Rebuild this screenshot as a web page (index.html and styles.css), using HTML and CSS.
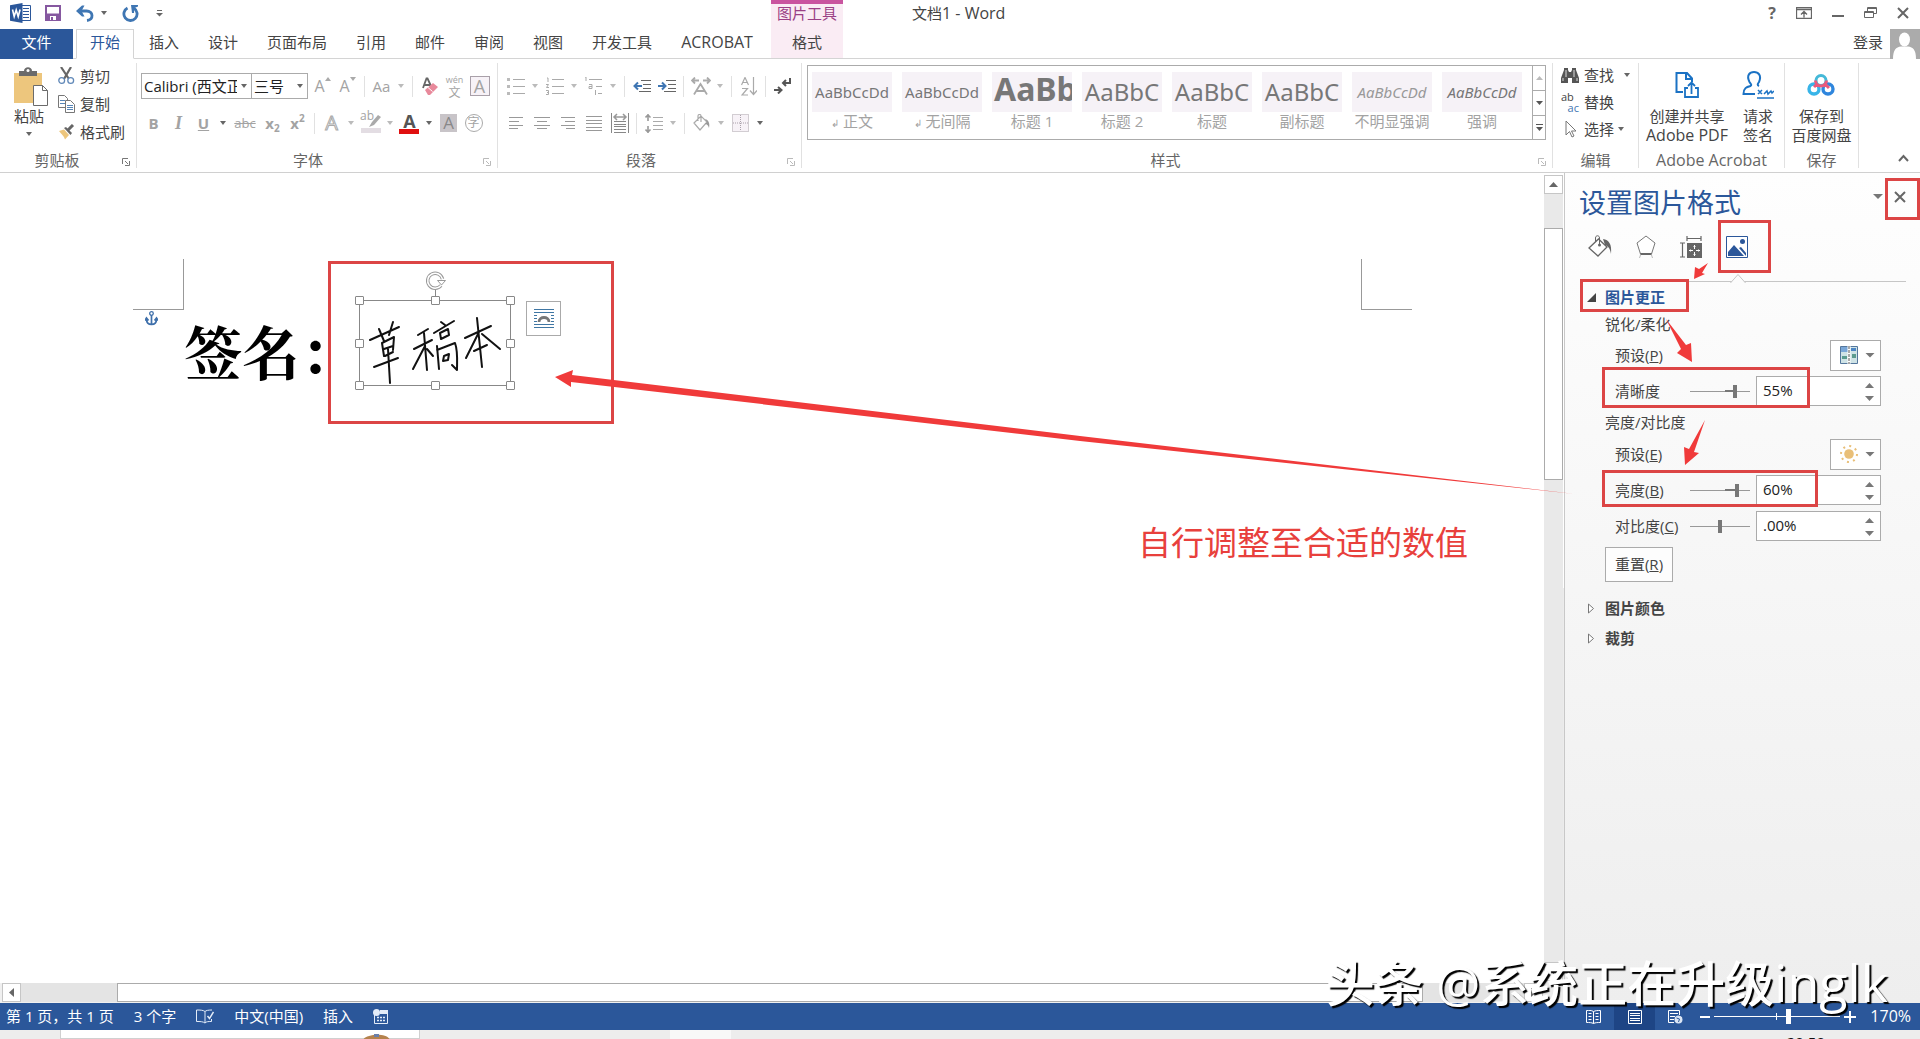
FILE: index.html
```html
<!DOCTYPE html>
<html lang="zh-CN">
<head>
<meta charset="utf-8">
<title>文档1 - Word</title>
<link rel="stylesheet" href="styles.css">
</head>
<body>
<header>
  <div class="titlebar">
    <div class="quick">
      <svg class="word-logo" width="21" height="20" viewBox="0 0 21 20"><path d="M12 2.500h8.500v15H12" fill="#fff" stroke="#2b579a"/><path d="M13 5.500h6M13 8.500h6M13 11.500h6M13 14.500h6" stroke="#2b579a"/><path d="M0 2.200L12.500 0v20L0 17.800z" fill="#2b579a"/><path d="M2.500 6.500l1.700 7 2-6.500 2 6.500 1.900-7" fill="none" stroke="#fff" stroke-width="1.600"/></svg>
      <button aria-label="保存"><svg width="16" height="16" viewBox="0 0 16 16"><path d="M1 1h14v14H1z" fill="#fff" stroke="#8658a0" stroke-width="2"/><path d="M2 8.500h12V15H2z" fill="#8658a0"/><path d="M5 11h6v4H5z" fill="#fff"/><path d="M6 12h2v3H6z" fill="#8658a0"/></svg></button>
      <button aria-label="撤消"><svg width="18" height="17" viewBox="0 0 18 17"><path d="M2 6h8.500c7 0 7.500 8.500.5 9.500" fill="none" stroke="#3f76b3" stroke-width="2.800"/><path d="M0 6l6-5.500h2.500L5.500 6l3 5.500H6z" fill="#3f76b3"/></svg></button>
      <i class="caret dark"></i>
      <button aria-label="恢复" class="redo"><svg width="17" height="17" viewBox="0 0 17 17"><path d="M5.500 3A6.600 6.600 0 1 0 12 3.300" fill="none" stroke="#3f76b3" stroke-width="2.800"/><path d="M9 0h7v1.500L12.500 3l-.5 5H10z" fill="#3f76b3"/></svg></button>
      <svg class="custom" width="7" height="7" viewBox="0 0 7 7"><path d="M1 .5h5" stroke="#666"/><path d="M0 3h7L3.500 6.500z" fill="#666"/></svg>
    </div>
    <div class="context-title">图片工具</div>
    <div class="doc-title">文档<span class="latin">1 - Word</span></div>
    <div class="window-controls">
      <button aria-label="帮助" class="help">?</button>
      <button aria-label="功能区显示选项"><svg width="16" height="12" viewBox="0 0 16 12"><path d="M.5.500h15v11H.5zM.5 2.500h15M8 10.500V5M5 7.500l3-3 3 3" fill="none" stroke="#666" stroke-width="1.300"/></svg></button>
      <button aria-label="最小化"><svg width="12" height="12" viewBox="0 0 12 12"><path d="M0 9h12" stroke="#666" stroke-width="2"/></svg></button>
      <button aria-label="还原"><svg width="13" height="12" viewBox="0 0 13 12"><path d="M.5 4.500h9v6h-9zM3.500 4V.5h9v6H10M.5 5.500h9M3.500 1.500h9" fill="none" stroke="#666"/></svg></button>
      <button aria-label="关闭"><svg width="12" height="12" viewBox="0 0 12 12"><path d="M1 1l10 10M11 1L1 11" stroke="#666" stroke-width="2"/></svg></button>
    </div>
  </div>
  <nav class="tabs">
    <div class="tabs-main">
      <button class="file">文件</button>
      <button class="active">开始</button>
      <button>插入</button>
      <button>设计</button>
      <button>页面布局</button>
      <button>引用</button>
      <button>邮件</button>
      <button>审阅</button>
      <button>视图</button>
      <button>开发工具</button>
      <button class="latin">ACROBAT</button>
    </div>
    <button class="context-tab">格式</button>
    <a class="login" href="#">登录</a>
    <svg class="avatar" width="30" height="30" viewBox="0 0 30 30"><path d="M0 0h30v30H0z" fill="#ababab"/><ellipse cx="14.500" cy="10.500" rx="5.500" ry="7" fill="#fff"/><path d="M3 30c0-9 3-12 8-12.500h7c5 .5 8 3.500 8 12.500z" fill="#fff"/></svg>
  </nav>
  <div class="ribbon">
    <section class="group clipboard">
      <div class="group-body">
        <button class="big paste"><svg width="36" height="39" viewBox="0 0 36 39"><path d="M1 6h28v30H1z" fill="#edc67d"/><path d="M6 4h5c0-5 8-5 8 0h5v5H6z" fill="#6b6b6b"/><circle cx="15" cy="3.500" r="1.500" fill="#fff"/><path d="M20.500 18.500h9l5 5V38.500h-14z" fill="#fff" stroke="#6b6b6b"/><path d="M29.500 18.500v5h5" fill="none" stroke="#6b6b6b"/></svg><span>粘贴</span><i class="caret dark"></i></button>
        <div class="stack">
          <button><svg width="17" height="18" viewBox="0 0 17 18"><path d="M3 0l8 12M13 0L6 12" stroke="#666" stroke-width="2.200"/><circle cx="3.700" cy="13.500" r="2.900" fill="#fff" stroke="#6088b8" stroke-width="1.300"/><circle cx="12.700" cy="13.500" r="2.900" fill="#fff" stroke="#6088b8" stroke-width="1.300"/></svg>剪切</button>
          <button><svg width="17" height="18" viewBox="0 0 17 18"><path d="M.5.500h6l3 3v9h-9z" fill="#fff" stroke="#777"/><path d="M2 5.500h5M2 8.500h5" stroke="#5585b8"/><path d="M7.500 5.500h5l4 4v8h-9z" fill="#fff" stroke="#777"/><path d="M9 10.500h6M9 12.500h6M9 14.500h6" stroke="#5585b8"/></svg>复制</button>
          <button><svg width="17" height="16" viewBox="0 0 17 16"><path d="M1 7l5-1.500L11 11l-4 4.500C6 12 3 10 1 7z" fill="#edc67d"/><path d="M6 4l2-1 6 6-1.500 2z" fill="#666"/><path d="M10 6l5-5" stroke="#666" stroke-width="3"/></svg>格式刷</button>
        </div>
      </div>
      <footer class="has-launch">剪贴板<svg class="launch" width="8" height="8" viewBox="0 0 8 8"><path d="M.5 6V.500H6M3 3l3 3M7.500 3v4.500H3" fill="none" stroke="#777"/></svg></footer>
    </section>

    <section class="group font">
      <div class="rows">
        <div class="tools">
          <button class="combo name" aria-label="字体"><span>Calibri (西文正文)</span><i class="caret dark"></i></button>
          <button class="combo size" aria-label="字号"><span>三号</span><i class="caret dark"></i></button>
          <button class="t grow" aria-label="增大字号">A<svg width="6" height="4"><path d="M0 4h6L3 0z" fill="#aaa"/></svg></button>
          <button class="t grow" aria-label="减小字号">A<svg width="6" height="4"><path d="M0 0h6L3 4z" fill="#aaa"/></svg></button>
          <i class="sep"></i>
          <button class="t aa">Aa</button><i class="caret"></i>
          <i class="sep"></i>
          <button class="t" aria-label="清除格式"><svg width="16" height="18" viewBox="0 0 16 18"><path d="M1 11L4.500 1.500h1L9 9M2 8h6" fill="none" stroke="#666" stroke-width="1.800"/><path d="M3 13l8-7 5 4-8 8H6z" fill="#e8899b"/><path d="M6 10.500l4.500 4" stroke="#fff"/></svg></button>
          <button class="t pinyin"><small>wén</small><span>文</span></button>
          <button class="t"><span class="boxed">A</span></button>
        </div>
        <div class="tools">
          <button class="t bold">B</button>
          <button class="t italic">I</button>
          <button class="t under">U</button><i class="caret dark"></i>
          <button class="t strike">abc</button>
          <button class="t script">x<sub>2</sub></button>
          <button class="t script">x<sup>2</sup></button>
          <i class="sep"></i>
          <button class="t outline">A</button><i class="caret"></i>
          <button class="t mark"><span>ab</span><svg width="20" height="19" viewBox="0 0 20 19"><path d="M0 14h20v5H0z" fill="#e3dde3"/><path d="M8 13l3-5 6-7 3 2-7 8z" fill="#aaa"/></svg></button><i class="caret"></i>
          <button class="t color">A</button><i class="caret dark"></i>
          <button class="t"><span class="shaded">A</span></button>
          <button class="t"><span class="circled">字</span></button>
        </div>
      </div>
      <footer class="has-launch">字体<svg class="launch dim" width="8" height="8" viewBox="0 0 8 8"><path d="M.5 6V.500H6M3 3l3 3M7.500 3v4.500H3" fill="none" stroke="#777"/></svg></footer>
    </section>

    <section class="group para">
      <div class="rows">
        <div class="tools">
          <button class="t" aria-label="项目符号"><svg width="18" height="18" viewBox="0 0 18 18"><path d="M6 2.500h12M6 9.500h12M6 16.500h12" stroke="#aaa"/><path d="M0 1h3v3H0zM0 8h3v3H0zM0 15h3v3H0z" fill="#bbb"/></svg></button><i class="caret"></i>
          <button class="t num" aria-label="编号"><svg width="18" height="18" viewBox="0 0 18 18"><path d="M6 2.500h12M6 9.500h12M6 16.500h12" stroke="#aaa"/><path d="M1 1h1v4M0 7.500h2.500L.5 10.500h2.500M0 13.500h2.500v4H0M1 15.500h1.500" fill="none" stroke="#aaa"/></svg></button><i class="caret"></i>
          <button class="t" aria-label="多级列表"><svg width="20" height="18" viewBox="0 0 20 18"><path d="M5 2.500h13M12 9.500h6M14 16.500h4M1 0h1v4M5 7.500h3v4H5v-2h3M11.500 13v5" fill="none" stroke="#aaa"/></svg></button><i class="caret"></i>
          <i class="sep"></i>
          <button class="t" aria-label="减少缩进量"><svg width="18" height="12" viewBox="0 0 18 12"><path d="M8 .5h10M10 4.500h8M10 8.500h8M6 11.500h12" stroke="#666"/><path d="M2 6h7M5 2.500L1.500 6 5 9.500" fill="none" stroke="#3f76b3" stroke-width="2"/></svg></button>
          <button class="t" aria-label="增加缩进量"><svg width="18" height="12" viewBox="0 0 18 12"><path d="M8 .5h10M10 4.500h8M10 8.500h8M6 11.500h12" stroke="#666"/><path d="M0 6h7M4 2.500L7.500 6 4 9.500" fill="none" stroke="#3f76b3" stroke-width="2"/></svg></button>
          <i class="sep"></i>
          <button class="t" aria-label="中文版式"><svg width="20" height="18" viewBox="0 0 20 18"><path d="M3 17.500L9.500 7 16 17.500M6 14h7M1 3.500h7M4 .5l-3 3 3 3M12 3.500h7M16 .5l3 3-3 3" fill="none" stroke="#aaa" stroke-width="1.800"/></svg></button><i class="caret"></i>
          <i class="sep"></i>
          <button class="t" aria-label="排序"><svg width="16" height="19" viewBox="0 0 16 19"><path d="M.5 8L4 .5 7.500 8M2 5.500h4M1 11.500h5.500L1 18h6M12.500 0v17M9 13.500l3.500 4 3.500-4" fill="none" stroke="#aaa" stroke-width="1.200"/></svg></button>
          <i class="sep"></i>
          <button class="t" aria-label="显示编辑标记"><svg width="17" height="16" viewBox="0 0 17 16"><path d="M16 0v5h-6M12 2L9 5l3 3M0 12h6M4 9l3.500 3L4 15.500" fill="none" stroke="#555" stroke-width="2"/></svg></button>
        </div>
        <div class="tools">
          <div class="aligns">
            <button class="t" aria-label="左对齐"><svg width="16" height="12" viewBox="0 0 16 12"><path d="M1 .5h14M1 4.500h10M1 8.500h14M1 11.500h9" stroke="#999"/></svg></button>
            <button class="t" aria-label="居中"><svg width="16" height="12" viewBox="0 0 16 12"><path d="M0 .5h16M3 4.500h10M0 8.500h16M3 11.500h10" stroke="#999"/></svg></button>
            <button class="t" aria-label="右对齐"><svg width="16" height="12" viewBox="0 0 16 12"><path d="M1 .5h14M5 4.500h10M1 8.500h14M6 11.500h9" stroke="#999"/></svg></button>
            <button class="t" aria-label="两端对齐"><svg width="16" height="15" viewBox="0 0 16 15"><path d="M0 .5h16M0 4.500h16M0 7.500h16M0 11.500h16M0 14.500h16" stroke="#999"/></svg></button>
            <button class="t" aria-label="分散对齐"><svg width="18" height="20" viewBox="0 0 18 20"><path d="M.5 0v20M17.500 0v20M3 8.500h12M3 11.500h12M3 13.500h12M3 16.500h12M3 19.500h12" stroke="#888"/><path d="M3 4h12M6 1L3 4l3 3M12 1l3 3-3 3" fill="none" stroke="#999" stroke-width="1.500"/></svg></button>
          </div>
          <i class="sep"></i>
          <button class="t" aria-label="行距"><svg width="18" height="19" viewBox="0 0 18 19"><path d="M8 3.500h10M8 7.500h10M8 11.500h10M8 15.500h10" stroke="#aaa"/><path d="M3 0v7M3 12v7M.5 3.500L3 1l2.500 2.500M.5 15.500L3 18l2.500-2.500" fill="none" stroke="#999" stroke-width="1.600"/></svg></button><i class="caret"></i>
          <i class="sep"></i>
          <button class="t" aria-label="底纹"><svg width="17" height="18" viewBox="0 0 17 18"><path d="M1 9l7-7 6 6-7 8zM5 7V2c0-2 3-2 3 0v6" fill="none" stroke="#aaa" stroke-width="1.200"/><path d="M12 5c4 1 5 5 4 9-1-3-2-4-4-4l2-2z" fill="#999"/></svg></button><i class="caret"></i>
          <button class="t" aria-label="边框"><svg width="17" height="18" viewBox="0 0 17 18"><path d="M.5.500h16v17H.5z" fill="#f7f2f7" stroke="#a9a0a9" stroke-dasharray="1 1"/><path d="M8.500 1v16M1 9h15" stroke="#a9a0a9" stroke-dasharray="1 1"/></svg></button><i class="caret dark"></i>
        </div>
      </div>
      <footer class="has-launch">段落<svg class="launch dim" width="8" height="8" viewBox="0 0 8 8"><path d="M.5 6V.500H6M3 3l3 3M7.500 3v4.500H3" fill="none" stroke="#777"/></svg></footer>
    </section>

    <section class="group styles">
      <div class="gallery">
        <button><span class="sample">AaBbCcDd</span><span><small>↲</small> 正文</span></button>
        <button><span class="sample">AaBbCcDd</span><span><small>↲</small> 无间隔</span></button>
        <button><span class="sample h1">AaBb</span><span>标题 1</span></button>
        <button><span class="sample h2">AaBbC</span><span>标题 2</span></button>
        <button><span class="sample h2">AaBbC</span><span>标题</span></button>
        <button><span class="sample h2">AaBbC</span><span>副标题</span></button>
        <button><span class="sample em soft">AaBbCcDd</span><span>不明显强调</span></button>
        <button><span class="sample em">AaBbCcDd</span><span>强调</span></button>
        <div class="gallery-nav">
          <button aria-label="上一行"><svg width="7" height="4"><path d="M0 4h7L3.500 0z" fill="#bbb"/></svg></button>
          <button aria-label="下一行"><svg width="7" height="4"><path d="M0 0h7L3.500 4z" fill="#555"/></svg></button>
          <button aria-label="其他"><svg width="7" height="7"><path d="M0 0h7v1H0zM0 3h7L3.500 7z" fill="#555"/></svg></button>
        </div>
      </div>
      <footer class="has-launch">样式<svg class="launch dim" width="8" height="8" viewBox="0 0 8 8"><path d="M.5 6V.500H6M3 3l3 3M7.500 3v4.500H3" fill="none" stroke="#777"/></svg></footer>
    </section>

    <section class="group edit">
      <div class="stack">
        <button><svg width="18" height="16" viewBox="0 0 18 16"><path d="M0 16v-5L3 3V1h4v2l1 2h2l1-2V1h4v2l3 8v5h-7v-5H7v5z" fill="#555"/><path d="M2 14v-3M16 14v-3M5 3v7M13 3v7" stroke="#ddd"/></svg>查找<i class="caret dark far"></i></button>
        <button><span class="swap" aria-hidden="true"><b>ab</b><em>ac</em></span>替换</button>
        <button><svg width="18" height="18" viewBox="0 0 18 18"><path d="M5 1v14l3.500-3.500L11 17l2-1-2.500-5H15z" fill="#fff" stroke="#777"/></svg>选择<i class="caret dark"></i></button>
      </div>
      <footer>编辑</footer>
    </section>

    <section class="group acrobat">
      <div class="group-body">
        <button class="big"><svg width="26" height="28" viewBox="0 0 26 28"><path d="M9 21H2.500V2H13l5 5.500V11M12 2v6h6" fill="none" stroke="#1b72c4" stroke-width="2"/><path d="M14 17h-3v9h13v-9h-3M17.500 23V12M14 15l3.500-3.500L21 15" fill="none" stroke="#1b72c4" stroke-width="1.800"/></svg><span>创建并共享<br><span class="latin">Adobe PDF</span></span></button>
        <button class="big"><svg width="32" height="28" viewBox="0 0 32 28"><path d="M13 23H1.500c0-6 3-7 7-8 1.500-1 .5-2-1-4C4 4 8 1 12 1s8 3 5 10c-1.500 2-2 3 0 4" fill="none" stroke="#1b72c4" stroke-width="2"/><path d="M15 27h17M16 19l4 4m0-4l-4 4M22 23l3-3 1 3 3-3 1 2 2-2" fill="none" stroke="#1b72c4" stroke-width="1.500"/></svg><span>请求<br>签名</span></button>
      </div>
      <footer class="latin">Adobe Acrobat</footer>
    </section>

    <section class="group save">
      <div class="group-body">
        <button class="big"><svg width="28" height="28" viewBox="0 0 28 28"><circle cx="14" cy="9.500" r="5" fill="none" stroke="#45b9d8" stroke-width="3"/><circle cx="7" cy="18" r="5" fill="none" stroke="#38b4e8" stroke-width="3.400"/><circle cx="21" cy="18" r="5" fill="none" stroke="#2f86dd" stroke-width="3.400"/><path d="M8.500 9.500a5.500 5.500 0 0 0 11 0M10 13l-3 3M18 13l4 4" fill="none" stroke="#e95a7d" stroke-width="3"/></svg><span>保存到<br>百度网盘</span></button>
      </div>
      <footer>保存</footer>
    </section>
    <button class="collapse" aria-label="折叠功能区"><svg width="11" height="8" viewBox="0 0 11 8"><path d="M1 7l4.500-5L10 7" fill="none" stroke="#666" stroke-width="2"/></svg></button>
  </div>
</header>

<main>
  <div class="document">
    <article class="page">
      <div class="margins"><span class="corner left"></span><span class="corner right"></span></div>
      <svg class="anchor" width="13" height="15" viewBox="0 0 13 15"><circle cx="6.500" cy="2.500" r="1.800" fill="none" stroke="#3f70ab" stroke-width="1.300"/><path d="M6.500 4v9.500M1.500 8c0 3.500 2 5.500 5 5.500s5-2 5-5.500M0 9.500L1.500 7 3.500 9.500M9.500 9.500L11.500 7 13 9.500" fill="none" stroke="#3f70ab" stroke-width="1.700"/></svg>
      <div class="line">
        <h1>签名：</h1>
        <div class="picture">
          <svg width="152" height="87" viewBox="0 0 152 87" role="img" aria-label="草稿本"><g fill="none" stroke="#111" stroke-width="2" stroke-linecap="round" stroke-linejoin="round"><path d="M10 39L39 26M19 28l5 12M33 21l-4 13M22 42l2 13M22 42l12-6-1 13M24 48l9-3M25 55l8-4M14 66l24-9M28 48l2 34"/><path d="M58 34l10-6M54 48l18-9M64 32l3 37M65 45L53 68M67 48l6 7M81 21l4 3M74 32l20-12M80 32l8-4 1 6-8 4zM77 45l2 23M77 49l18-7c3 8 2 18 2 27l-5-5M84 55l5-2-1 6-5 1z"/><path d="M105 37l26-12M117 17l5 49M119 31L106 57M122 33l18 15M114 50l13-6"/></g></svg>
          <i class="stem"></i>
          <svg class="rotate" width="20" height="19" viewBox="0 0 20 19"><path d="M15 14.500A7.500 7.500 0 1 1 16.500 8" fill="none" stroke="#999" stroke-width="3.500"/><path d="M15 14.500A7.500 7.500 0 1 1 16.500 8" fill="none" stroke="#fff" stroke-width="1.500"/><path d="M11.500 9.500h8l-4 4.500z" fill="#fff" stroke="#999"/></svg>
          <i class="h nw"></i><i class="h n"></i><i class="h ne"></i><i class="h w"></i><i class="h e"></i><i class="h sw"></i><i class="h s"></i><i class="h se"></i>
        </div>
        <button class="layout-options" aria-label="布局选项"><svg width="20" height="20" viewBox="0 0 20 20"><path d="M0 .5h20M0 3.500h20M0 15.500h20M0 18.500h20M0 6.500h3M0 9.500h3M0 12.500h3M17 6.500h3M17 9.500h3M17 12.500h3" stroke="#3f76a3"/><path d="M5 13c0-6 10-6 10 0" fill="none" stroke="#777" stroke-width="2.800"/></svg></button>
      </div>
    </article>
    <div class="hscroll">
      <button aria-label="向左"><svg width="5" height="9"><path d="M5 0v9L0 4.500z" fill="#666"/></svg></button>
      <i class="lead"></i><i class="thumb"></i><i class="rest"></i>
      <button aria-label="向右"><svg width="5" height="9"><path d="M0 0v9l5-4.500z" fill="#666"/></svg></button>
    </div>
  </div>
  <div class="vscroll">
    <button aria-label="向上"><svg width="9" height="5"><path d="M0 5h9L4.500 0z" fill="#666"/></svg></button>
    <i class="lead"></i><i class="thumb"></i><i class="rest"></i>
    <button aria-label="向下"><svg width="9" height="5"><path d="M0 0h9L4.500 5z" fill="#666"/></svg></button>
  </div>
  <aside class="pane">
    <div class="pane-head"><h2>设置图片格式</h2><i class="caret wide"></i><button aria-label="关闭窗格"><svg width="12" height="12" viewBox="0 0 12 12"><path d="M1 1l10 10M11 1L1 11" stroke="#666" stroke-width="2"/></svg></button></div>
    <div class="pane-tabs">
      <button aria-label="填充与线条"><svg width="24" height="23" viewBox="0 0 24 23"><path d="M1 13L10.500 4 19 12l-9 9z" fill="#fff" stroke="#666" stroke-width="1.300"/><path d="M7.500 7V3c0-3 4-3 4 0v7" fill="none" stroke="#666"/><circle cx="11.500" cy="10" r="1.500" fill="#666"/><path d="M15 4c6 1 9 5 8 15-1-6-3-8-6-9z" fill="#666"/></svg></button>
      <button aria-label="效果"><svg width="20" height="23" viewBox="0 0 20 23"><path d="M10 1l9 7-3.500 11h-11L1 8z" fill="#fff" stroke="#777"/><path d="M4.500 19h11" stroke="#666" stroke-width="2"/><path d="M4.500 20l-1 3M15.500 20l1 3" stroke="#bbb"/></svg></button>
      <button aria-label="布局属性"><svg width="22" height="22" viewBox="0 0 22 22"><path d="M7 2.500h14M7 0v5M21 0v5M2.500 7v14M0 7h5M0 21h5" stroke="#666" stroke-width="1.200"/><path d="M7 7h15v15H7z" fill="#666"/><path d="M14.500 9v4M14.500 16v4M9 14.500h4M16 14.500h4M13.500 10.500l1-1 1 1M13.500 18.500l1 1 1-1M10.500 13.500l-1 1 1 1M18.500 13.500l1 1-1 1" fill="none" stroke="#fff"/></svg></button>
      <button aria-label="图片"><svg width="22" height="22" viewBox="0 0 22 22"><path d="M.5.500h21v21H.5z" fill="#fff" stroke="#2b579a"/><circle cx="16.500" cy="5.500" r="2.500" fill="#2b579a"/><path d="M2 20v-4l6-7 10 11zM13 12l2-1 5 6v3z" fill="#2b579a"/></svg></button>
    </div>
    <svg class="notch" width="16" height="9" viewBox="0 0 16 9"><path d="M0 9.500L8 .5l8 9z" fill="#fcfcfc" stroke="#c6c6c6"/></svg>
    <div class="pane-body">
      <button class="section open"><svg width="9" height="9"><path d="M9 0v9H0z" fill="#444"/></svg>图片更正</button>
      <h3>锐化/柔化</h3>
      <div class="row"><label for="p1">预设(<u>P</u>)</label><button id="p1" class="preset"><svg width="18" height="18" viewBox="0 0 18 18"><path d="M.5.500h17v17H.5z" fill="#cfe3e6" stroke="#55779c"/><path d="M1 1h7v5H1z" fill="#7aa7d8"/><path d="M2 10h5v3H2zM12 8h4v4h-4z" fill="#5b9b8f"/><path d="M11 2h5v3h-5z" fill="#4d86c4"/><path d="M9 0v18" stroke="#fff" stroke-width="3"/><path d="M9 0v18" stroke="#555" stroke-dasharray="3 1"/></svg><i class="caret wide"></i></button></div>
      <div class="row"><label for="r1">清晰度</label><input id="r1" class="up" type="range" min="-100" max="100" value="55"><span class="spin"><input type="text" value="55%" aria-label="清晰度数值"><span class="arrows"><i></i><i></i></span></span></div>
      <h3>亮度/对比度</h3>
      <div class="row"><label for="p2">预设(<u>E</u>)</label><button id="p2" class="preset"><svg width="18" height="18" viewBox="0 0 18 18"><circle cx="9" cy="9" r="4.800" fill="#e9bf78"/><circle cx="9" cy="9" r="8" fill="none" stroke="#e9bf78" stroke-width="2" stroke-dasharray="2 4.280"/></svg><i class="caret wide"></i></button></div>
      <div class="row"><label for="r2">亮度(<u>B</u>)</label><input id="r2" class="up" type="range" min="-100" max="100" value="60"><span class="spin"><input type="text" value="60%" aria-label="亮度数值"><span class="arrows"><i></i><i></i></span></span></div>
      <div class="row"><label for="r3">对比度(<u>C</u>)</label><input id="r3" type="range" min="-100" max="100" value="0"><span class="spin"><input type="text" value=".00%" aria-label="对比度数值"><span class="arrows"><i></i><i></i></span></span></div>
      <button class="reset">重置(<u>R</u>)</button>
      <button class="section"><svg width="9" height="11" viewBox="0 0 9 11"><path d="M1.500 1v9L6.500 5.500z" fill="#fff" stroke="#777"/></svg>图片颜色</button>
      <button class="section"><svg width="9" height="11" viewBox="0 0 9 11"><path d="M1.500 1v9L6.500 5.500z" fill="#fff" stroke="#777"/></svg>裁剪</button>
    </div>
  </aside>
</main>

<footer class="status">
  <span>第 1 页，共 1 页</span>
  <span>3 个字</span>
  <svg width="18" height="15" viewBox="0 0 18 15"><path d="M9 14V2.500C7 1 4 1 .5 1v11.500c3.500 0 6.500 0 8.500 1.500 1.500-1.500 3-1.500 6.500-1.500V10M9 2.500C10 1.500 12 1 16 1" fill="none" stroke="#e3ecf8"/><path d="M11.500 7l2 2.500L17.500 3" fill="none" stroke="#e3ecf8" stroke-width="1.500"/></svg>
  <span>中文(中国)</span>
  <span>插入</span>
  <svg width="15" height="15" viewBox="0 0 15 15"><path d="M1.500 6v8.500h13v-13H7" fill="none" stroke="#e3ecf8"/><circle cx="3.500" cy="3.500" r="3.500" fill="#e3ecf8"/><path d="M7 1h8v4H7z" fill="#e3ecf8"/><path d="M4 8.500h9M4 11.500h9" stroke="#e3ecf8" stroke-dasharray="2 1" stroke-width="1.500"/></svg>
  <div class="views">
    <button aria-label="阅读视图"><svg width="15" height="14" viewBox="0 0 15 14"><path d="M7.500 13.500V1.500C5 0 3 .5.5.500v12c3 0 5 0 7 1 2-1 4-1 7-1V.500c-3 0-5 0-7 1M2.500 3.500h3M2.500 6.500h3M2.500 9.500h3M9.500 3.500h3M9.500 6.500h3M9.500 9.500h3" fill="none" stroke="#fff"/></svg></button>
    <button aria-label="页面视图" class="on"><svg width="14" height="14" viewBox="0 0 14 14"><path d="M.5.500h13v13H.5zM2 3.500h10M2 5.500h10M2 8.500h10M2 10.500h10" fill="none" stroke="#fff"/></svg></button>
    <button aria-label="Web 版式视图"><svg width="15" height="14" viewBox="0 0 15 14"><path d="M6 12.500H.5V.500h11V5M2 3.500h8M2 6.500h5M2 9.500h4" fill="none" stroke="#fff"/><circle cx="10.500" cy="9.500" r="4" fill="#dbe6f5"/><path d="M8.500 8l3 1-1 3" fill="none" stroke="#2b579a"/></svg></button>
  </div>
  <button aria-label="缩小" class="zoom"><svg width="10" height="12"><path d="M0 5h10v2H0z" fill="#fff"/></svg></button>
  <input type="range" class="zoom-range" aria-label="显示比例" min="0" max="100" value="59">
  <button aria-label="放大" class="zoom"><svg width="12" height="12"><path d="M0 5h12v2H0zM5 0h2v12H5z" fill="#fff"/></svg></button>
  <span class="percent latin">170%</span>
</footer>
<div class="desktop"><span class="window"><svg width="27" height="7" viewBox="0 0 27 7"><path d="M0 7C2 1 24-1 27 7z" fill="#b5824d"/><path d="M11 1h5v3h-5z" fill="#6a7fa8"/></svg></span><span class="patch"></span><span class="clock">20:50</span></div>

<svg class="notes" width="1600" height="600" viewBox="0 0 1600 600" aria-hidden="true"><path d="M329.500 262.500h283v160h-283z" fill="none" stroke="#dc4545" stroke-width="3"/><path d="M555 377l18-7-1 5L1080 436l495 58-495-53L571 382v5z" fill="#f03a3a"/></svg>
<p class="note-text">自行调整至合适的数值</p>
<svg class="notes pane-notes" width="356" height="600" viewBox="1564 0 356 600" aria-hidden="true"><g fill="none" stroke="#dc4545" stroke-width="3"><path d="M1886.500 179.500h32v39h-32zM1719.500 221.500h50v50h-50zM1581.500 280.500h106v30h-106zM1603.500 368.500h205v38h-205zM1603.500 471.500h213v34h-213z"/></g><path d="M1694 279l1-12 4 2 9-6-6 10 3 1zM1692 362l-15-9 4-4-15-30 20 26 5-2zM1685 465l-1-18 5 2 16-29-11 32 5 1z" fill="#f03a3a"/></svg>
<p class="watermark">头条 @系统正在升级<span>inglk</span></p>
</body>
</html>
```

FILE: styles.css
```css
* { box-sizing: border-box; }
html, body { height: 100%; }
body {
  margin: 0;
  display: flex;
  flex-direction: column;
  position: relative;
  overflow: hidden;
  background: #fff;
  color: #444;
  font: 15px/20px "Open Sans", "Noto Sans CJK SC", sans-serif;
}
button, input { font: inherit; color: inherit; }
button { border: 0; padding: 0; margin: 0; background: none; white-space: nowrap; }
i, em { font-style: normal; }
svg { display: block; flex: none; }
h1, h2, h3, p { margin: 0; font-weight: normal; }
a { color: inherit; text-decoration: none; }
.latin { font-size: 16px; }

.caret { flex: none; width: 14px; height: 4px; background: #bbb; clip-path: polygon(4px 0, 10px 0, 7px 4px); }
.caret.dark { background: #666; }
.caret.wide { width: 10px; height: 5px; background: #777; clip-path: polygon(0 0, 100% 0, 50% 100%); }

/* title bar */
.titlebar { display: flex; height: 29px; }
.quick { width: 771px; flex: none; display: flex; align-items: center; padding: 0 0 3px 10px; }
.quick .word-logo { margin-right: 14px; }
.quick button { margin-right: 15px; }
.quick button + .caret { margin-left: -12px; }
.quick .redo { margin: 0 17px 0 11px; }
.context-title { width: 72px; flex: none; border-top: 4px solid #c9549f; background: #faecf4; color: #9a3f85; text-align: center; line-height: 19px; }
.doc-title { flex: 1; padding: 3px 0 0 69px; }
.window-controls { display: flex; align-items: center; gap: 20px; padding: 0 11px 3px 0; }
.help { font-weight: bold; font-size: 16px; color: #666; }

/* tabs */
.tabs { display: flex; height: 30px; border-bottom: 1px solid #d4d4d4; }
.tabs-main { width: 771px; flex: none; display: flex; gap: 1px; height: 30px; }
.tabs button { padding: 0 14px 4px; height: 29px; line-height: 24px; }
.tabs .file { width: 73px; margin-right: 2px; height: 30px; background: #2b579a; color: #fff; }
.tabs .active { width: 58px; height: 30px; padding: 0 13px 4px; border: 1px solid #d4d4d4; border-bottom-color: #fff; background: #fff; color: #2b579a; }
.tabs .context-tab { width: 72px; background: #faecf4; }
.login { margin-left: auto; line-height: 26px; padding-right: 7px; }

/* ribbon */
.ribbon { display: flex; height: 114px; padding: 4px 0; border-bottom: 1px solid #d0d0d0; }
.group { flex: none; display: flex; flex-direction: column; justify-content: space-between; border-right: 1px solid #e1e1e1; }
.group > footer { position: relative; text-align: center; line-height: 16px; color: #666; }
.group > .has-launch { padding-right: 22px; }
.launch { position: absolute; right: 6px; bottom: 2px; }
.launch.dim { opacity: .5; }
.group-body { display: flex; }
.big { display: flex; flex-direction: column; align-items: center; line-height: 19px; }
.stack { display: flex; flex-direction: column; }
.stack button { display: flex; align-items: center; gap: 5px; height: 28px; padding-bottom: 2px; }
.clipboard { width: 137px; }
.paste { width: 58px; padding: 4px 0 0; gap: 1px; }
.paste svg { margin-left: 4px; }
.paste .caret { margin-top: 5px; }
.font { width: 361px; padding-left: 4px; }
.para { width: 304px; padding-left: 5px; }
.rows { display: flex; flex-direction: column; gap: 11px; padding-top: 10px; }
.tools { display: flex; align-items: center; height: 26px; }
.aligns { display: flex; gap: 1px; }
.sep { width: 1px; height: 21px; margin: 0 4px; background: #e1e1e1; flex: none; }
.t { width: 25px; height: 26px; flex: none; display: flex; align-items: center; justify-content: center; color: #a3a3a3; position: relative; }
.combo { display: flex; align-items: center; height: 26px; border: 1px solid #ababab; background: #fff; color: #222; padding-left: 2px; }
.combo span { flex: 1; overflow: hidden; text-align: left; }
.combo.name { width: 111px; }
.combo.size { width: 57px; margin: 0 2px 0 -1px; }
.grow { font-size: 16px; }
.grow svg { align-self: flex-start; margin-top: 4px; }
.pinyin { flex-direction: column; }
.pinyin small { font-size: 9px; line-height: 12px; }
.pinyin span { font-size: 12px; line-height: 13px; }
.boxed { width: 20px; height: 20px; border: 1px solid #a9a0a9; background: #f7f2f7; font-size: 18px; line-height: 18px; }
.bold { font-weight: bold; }
.italic { font-style: italic; font-family: "Liberation Serif", serif; font-weight: bold; font-size: 18px; }
.under { text-decoration: underline; font-weight: bold; }
.strike { width: 30px; text-decoration: line-through; font-size: 13px; }
.script { font-weight: bold; }
.script sub, .script sup { font-size: 10px; line-height: 12px; }
.script sub { align-self: flex-end; padding-bottom: 2px; }
.script sup { align-self: flex-start; padding-top: 2px; }
.outline { font-size: 20px; color: #fff; -webkit-text-stroke: 1px #aaa; }
.mark span { position: absolute; left: 2px; top: 0; font-size: 12px; line-height: 12px; }
.color { padding-bottom: 5px; font-size: 18px; font-weight: bold; color: #555; line-height: 18px; }
.color::after { content: ""; position: absolute; left: 2px; right: 3px; bottom: 2px; height: 5px; background: #e01010; }
.shaded { width: 17px; background: #c8c4c8; color: #888; font-size: 17px; line-height: 18px; }
.circled { width: 18px; height: 18px; border: 1px solid #aaa; border-radius: 50%; font-size: 12px; line-height: 15px; }
.styles { flex: 1; min-width: 0; padding: 2px 6px 0 5px; }
.gallery { display: flex; gap: 10px; height: 75px; border: 1px solid #ababab; padding-left: 4px; overflow: hidden; }
.gallery > button { width: 80px; flex: none; padding-top: 6px; display: flex; flex-direction: column; color: #a3a3a3; align-items: stretch; text-align: center; line-height: 18px; }
.gallery small { font-size: 10px; }
.sample { height: 40px; padding: 0 2px; background: #f6f2f7; color: #777; line-height: 40px; overflow: hidden; font-family: "Noto Sans", sans-serif; }
.sample.h1 { font-size: 32px; line-height: 34px; font-weight: bold; color: #777; text-align: left; }
.sample.h2 { font-size: 24px; }
.sample.em { font-style: italic; }
.sample.soft { color: #999; }
.gallery-nav { margin-left: auto; width: 18px; display: grid; grid-template-rows: repeat(3, 1fr); border-left: 1px solid #ababab; }
.gallery-nav button { display: grid; place-items: center; }
.gallery-nav button + button { border-top: 1px solid #ababab; }
.styles .launch { right: 0; }
.edit { width: 86px; }
.edit .stack { padding-left: 8px; }
.edit .stack button { height: 27px; padding-bottom: 3px; }
.edit .stack .caret { margin-left: -5px; }
.edit .stack .far { margin-left: 1px; }
.swap { width: 18px; font-size: 11px; line-height: 11px; text-align: left; }
.swap b { display: block; font-weight: normal; }
.swap em { display: block; color: #3f76b3; text-align: right; }
.acrobat { width: 146px; }
.acrobat .group-body { padding-left: 7px; gap: 14px; }
.acrobat .big, .save .big { padding-top: 8px; gap: 8px; }
.save { width: 74px; }
.save .group-body { justify-content: center; }
.collapse { flex: none; width: 61px; display: flex; justify-content: flex-end; padding: 0 11px 6px 0; align-self: flex-end; }

/* document */
main { flex: 1; min-height: 0; display: grid; grid-template-columns: 1fr 20px 356px; }
.document { display: flex; flex-direction: column; min-width: 0; }
.page { flex: 1; padding: 86px 0 0 133px; position: relative; }
.margins { display: flex; justify-content: space-between; width: 1279px; max-width: 100%; }
.corner { width: 51px; height: 51px; border-bottom: 1px solid #999; }
.corner.left { border-right: 1px solid #999; }
.corner.right { border-left: 1px solid #999; }
.anchor { margin: 1px 0 0 12px; }
.line { display: flex; align-items: flex-start; margin-top: -26px; padding-left: 51px; }
.line h1 { width: 175px; padding-top: 10px; color: #000; font: bold 58px/80px "Noto Serif CJK SC", "Noto Sans CJK SC", serif; white-space: nowrap; }
.picture { position: relative; width: 152px; height: 86px; border: 1px solid #888; }
.h { position: absolute; width: 9px; height: 9px; border: 1px solid #888; border-radius: 1px; background: #fff; }
.nw, .n, .ne { top: -5px; }
.w, .e { top: 38px; }
.sw, .s, .se { bottom: -5px; }
.nw, .w, .sw { left: -5px; }
.n, .s { left: 71px; }
.ne, .e, .se { right: -5px; }
.stem { position: absolute; left: 75px; top: -12px; width: 1px; height: 12px; background: #888; }
.rotate { position: absolute; left: 66px; top: -30px; }
.layout-options { width: 35px; height: 35px; margin-left: 15px; margin-top: 1px; border: 1px solid #aaa; display: grid; place-items: center; }

.hscroll { display: flex; height: 20px; padding: 0 1px 1px 2px; background: #f0f0f0; }
.hscroll button, .vscroll button { flex: none; width: 19px; height: 19px; display: grid; place-items: center; border: 1px solid #c6c6c6; background: #fff; }
.hscroll i { background: #e4e4e4; }
.hscroll .lead { flex: 96 1 0; }
.hscroll .thumb { flex: 1306 1 0; background: #fff; border: 1px solid #ababab; }
.hscroll .rest { flex: 101 1 0; }
.vscroll { display: flex; flex-direction: column; align-items: stretch; padding: 2px 1px 22px 0; background: linear-gradient(#fff 50%, #ececec 50%); }
.vscroll i { background: #e9e9e9; }
.vscroll .lead { flex: 34 1 0; }
.vscroll .thumb { flex: 250 1 0; background: #fff; border: 1px solid #ababab; }
.vscroll .rest { flex: 482 1 0; }

/* format pane */
.pane { position: relative; border-left: 1px solid #c8c8c8; background: linear-gradient(#fefefe, #eee); }
.pane-head { display: flex; align-items: flex-start; padding: 13px 14px 0 14px; height: 62px; }
.pane-head h2 { flex: 1; font-size: 27px; line-height: 34px; color: #2b579a; }
.pane-head .caret { margin: 8px 11px 0 0; }
.pane-head button { margin-top: 5px; }
.pane-tabs { display: flex; align-items: center; gap: 24px; height: 47px; margin: 0 14px 0 15px; padding: 0 0 23px 8px; border-bottom: 1px solid #c6c6c6; }
.notch { position: absolute; left: 165px; top: 101px; }
.pane-body { display: flex; flex-direction: column; padding: 0 39px 0 22px; }
.section { display: flex; align-items: center; gap: 9px; height: 30px; font-weight: bold; }
.section.open { color: #2b579a; }
.pane h3 { padding-left: 18px; font-size: 15px; line-height: 24px; padding-bottom: 1px; }
.row { display: flex; align-items: center; height: 36px; padding-left: 28px; }
.row label { width: 75px; padding-bottom: 1px; white-space: nowrap; }
.row .preset { margin-left: auto; }
.preset { display: flex; align-items: center; gap: 7px; width: 51px; height: 31px; padding-left: 9px; border: 1px solid #ababab; background: #fff; }
.spin { display: flex; width: 125px; height: 30px; margin-left: 6px; border: 1px solid #ababab; background: #fff; color: #222; }
.spin input { width: 94px; border: 0; padding: 0 0 2px 6px; background: none; outline: 0; }
.arrows { display: flex; flex-direction: column; gap: 8px; margin: 6px 0 0 14px; }
.arrows i { width: 9px; height: 5px; background: #777; clip-path: polygon(0 0, 100% 0, 50% 100%); }
.arrows i:first-child { clip-path: polygon(50% 0, 100% 100%, 0 100%); }
input[type=range] { appearance: none; flex: none; width: 60px; height: 14px; margin: 0; background: linear-gradient(#999, #999) center / 100% 1px no-repeat; }
input.up { background: linear-gradient(#777, #777) 35px center / 12px 2px no-repeat, linear-gradient(#999, #999) center / 100% 1px no-repeat; }
input[type=range]::-webkit-slider-thumb { appearance: none; width: 4px; height: 13px; background: #777; }
.reset { width: 68px; height: 35px; margin: 3px 0 11px 18px; padding-bottom: 2px; border: 1px solid #ababab; background: #fdfdfd; }
.pane-body .row + h3 { line-height: 26px; }

/* status bar */
.status { flex: none; display: flex; align-items: center; height: 27px; padding: 0 9px 0 6px; gap: 20px; background: #2b579a; color: #fff; }
.status > span { padding-bottom: 2px; }
.views { display: flex; margin-left: auto; }
.views button { width: 41px; height: 27px; display: grid; place-items: center; }
.views .on { background: #1e4585; }
.status .zoom-range { width: 126px; margin: 0 -16px; height: 16px; background: linear-gradient(#fff, #fff) 62px center / 1px 7px no-repeat, linear-gradient(#fff, #fff) center / 100% 1px no-repeat; }
.status .views { margin-right: -16px; }
.status .zoom-range::-webkit-slider-thumb { width: 5px; height: 15px; background: #fff; }
.percent { margin-left: -6px; }

/* strip of the desktop below the window */
.desktop { flex: none; display: flex; height: 9px; padding: 0 95px 0 60px; overflow: hidden; background: #ededed; }
.window { width: 360px; padding: 3px 0 0 302px; border: 1px solid #d0d0d0; border-top: 0; background: #fff; }
.patch { width: 61px; margin-left: 250px; background: #f8f8f8; }
.clock { margin-left: auto; padding-top: 2px; color: #111; }

/* marks drawn over the window */
.notes { position: absolute; left: 0; top: 0; pointer-events: none; }
.pane-notes { left: auto; right: 0; }
.note-text { position: absolute; left: 1138px; top: 521px; font-size: 33px; line-height: 44px; color: #e8403c; }
.watermark { position: absolute; right: 32px; bottom: 26px; font-size: 49px; line-height: 60px; font-weight: 500; color: #fff; text-shadow: 2px 2px 1px #000; white-space: nowrap; }
.watermark span { font-size: 52px; }
```
